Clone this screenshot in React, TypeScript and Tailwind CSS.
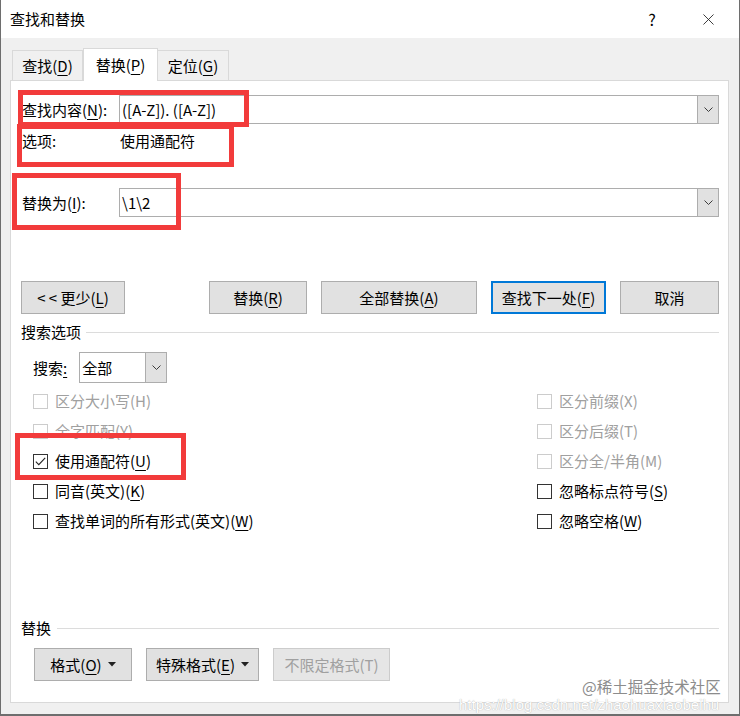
import { X } from "lucide-react";
import clsx from "clsx";
import type { ReactNode } from "react";

// access-key letter with underline
function K({ children }: { children: ReactNode }) {
    return <span className="underline underline-offset-[3px] decoration-1">{children}</span>;
}

function Chevron() {
    return (
        <svg width="9" height="5" viewBox="0 0 9 5" fill="none">
            <path d="M0.5 0.5L4.5 4.5L8.5 0.5" stroke="#3c3c3c" strokeWidth="1" />
        </svg>
    );
}

function ComboBox({ value, className }: { value: string; className?: string }) {
    return (
        <div className={clsx("flex h-[29px] border border-[#adadad] bg-white", className)}>
            <div className="flex-1 flex items-center pl-[2px] leading-[20px]">{value}</div>
            <div className="w-[21px] flex items-center justify-center bg-[#e1e1e1] border-l border-[#adadad]">
                <Chevron />
            </div>
        </div>
    );
}

function Btn({ className, children, primary, disabled }: { className: string; children: ReactNode; primary?: boolean; disabled?: boolean }) {
    return (
        <div
            className={clsx(
                "h-[33px] flex items-center justify-center leading-[20px]",
                primary ? "border-2 border-[#0078d7] bg-[#e1e1e1]" : "border border-[#adadad] bg-[#e1e1e1]",
                disabled && "!border-[#cccccc] !bg-[#e6e6e6] text-[#a0a0a0]",
                className
            )}>
            {children}
        </div>
    );
}

function Caret() {
    return (
        <svg width="8" height="5" viewBox="0 0 8 5" className="ml-[6px]">
            <path d="M0 0H8L4 4.5Z" fill="#222" />
        </svg>
    );
}

function Option({ label, checked, disabled }: { label: ReactNode; checked?: boolean; disabled?: boolean }) {
    return (
        <div className="flex items-center h-[30px] gap-[7px]">
            <div
                className={clsx(
                    "w-[15px] h-[15px] border bg-white flex items-center justify-center",
                    disabled ? "border-[#cccccc]" : "border-[#333333]"
                )}>
                {checked && (
                    <svg width="11" height="9" viewBox="0 0 11 9" fill="none">
                        <path d="M0.8 4.6L3.8 7.6L10.2 0.8" stroke="#222" strokeWidth="1.1" />
                    </svg>
                )}
            </div>
            <span className={clsx("leading-[20px]", disabled ? "text-[#a0a0a0]" : "text-black")}>{label}</span>
        </div>
    );
}

export default function App() {
    return (
        <div className="relative w-[740px] h-[716px] overflow-hidden bg-[#f0f0f0] border-l border-r border-b-2 border-[#6e6e6e] font-['Microsoft_YaHei_UI','Noto_Sans_CJK_SC',sans-serif] text-[15px] text-black">
            {/* title bar */}
            <div className="h-[38px] bg-white flex items-center pl-[9px]">
                <span className="flex-1 leading-[20px]">查找和替换</span>
                <div className="w-[56px] h-full flex items-center justify-center text-[16px]">?</div>
                <div className="w-[56px] h-full flex items-center justify-center mr-[3px]">
                    <X size={19} strokeWidth={1.1} color="#222" />
                </div>
            </div>

            {/* tabs */}
            <div className="flex items-end pl-[11px] pt-[10px]">
                <div className="w-[71px] h-[30px] flex items-center justify-center border border-b-0 border-[#d9d9d9] bg-[#f0f0f0] leading-[20px]">
                    查找(<K>D</K>)
                </div>
                <div className="relative z-10 -mb-px w-[75px] h-[33px] flex items-center justify-center border border-b-0 border-[#d9d9d9] bg-white leading-[20px]">
                    替换(<K>P</K>)
                </div>
                <div className="w-[71px] h-[30px] flex items-center justify-center border border-b-0 border-l-0 border-[#d9d9d9] bg-[#f0f0f0] leading-[20px]">
                    定位(<K>G</K>)
                </div>
            </div>

            {/* panel */}
            <div className="ml-[9px] w-[719px] h-[623px] bg-white border border-[#d9d9d9] pl-[10px] pr-[9px] pt-[14px] flex flex-col">
                <div className="flex items-center">
                    <div className="w-[98px] pl-[1px] leading-[20px]">
                        查找内容(<K>N</K>):
                    </div>
                    <ComboBox value="([A-Z]). ([A-Z])" className="flex-1" />
                </div>
                <div className="flex mt-[7px] h-[20px] leading-[20px]">
                    <div className="w-[98px] pl-[1px]">选项:</div>
                    <div className="pl-[1px]">使用通配符</div>
                </div>
                <div className="flex items-center mt-[37px]">
                    <div className="w-[98px] pl-[1px] leading-[20px]">
                        替换为(<K>I</K>):
                    </div>
                    <ComboBox value="\1\2" className="flex-1" />
                </div>

                <div className="flex justify-between mt-[64px]">
                    <Btn className="w-[104px]">
                        {"< < 更少("}
                        <K>L</K>)
                    </Btn>
                    <div className="flex gap-[14px]">
                        <Btn className="w-[98px]">
                            替换(<K>R</K>)
                        </Btn>
                        <Btn className="w-[156px]">
                            全部替换(<K>A</K>)
                        </Btn>
                        <Btn className="w-[115px]" primary>
                            查找下一处(<K>F</K>)
                        </Btn>
                        <Btn className="w-[99px]">取消</Btn>
                    </div>
                </div>

                <div className="flex items-center gap-[5px] mt-[8px] h-[20px]">
                    <span className="leading-[20px]">搜索选项</span>
                    <div className="flex-1 h-px bg-[#dcdcdc]" />
                </div>

                <div className="flex items-center mt-[10px] pl-[12px] gap-[12px]">
                    <span className="leading-[20px]">
                        搜索<K>:</K>
                    </span>
                    <ComboBox value="全部" className="w-[88px] h-[31px]" />
                </div>

                <div className="grid grid-cols-[504px_1fr] pl-[12px] mt-[3px]">
                    <Option label="区分大小写(H)" disabled />
                    <Option label="区分前缀(X)" disabled />
                    <Option label="全字匹配(Y)" disabled />
                    <Option label="区分后缀(T)" disabled />
                    <Option label={<>使用通配符(<K>U</K>)</>} checked />
                    <Option label="区分全/半角(M)" disabled />
                    <Option label={<>同音(英文)(<K>K</K>)</>} />
                    <Option label={<>忽略标点符号(<K>S</K>)</>} />
                    <Option label={<>查找单词的所有形式(英文)(<K>W</K>)</>} />
                    <Option label={<>忽略空格(<K>W</K>)</>} />
                </div>

                <div className="flex items-center gap-[6px] mt-[82px] h-[20px]">
                    <span className="leading-[20px]">替换</span>
                    <div className="flex-1 h-px bg-[#dcdcdc]" />
                </div>

                <div className="flex gap-[14px] mt-[10px] ml-[13px]">
                    <Btn className="w-[98px]">
                        格式(<K>O</K>)
                        <Caret />
                    </Btn>
                    <Btn className="w-[113px]">
                        特殊格式(<K>E</K>)
                        <Caret />
                    </Btn>
                    <Btn className="w-[117px]" disabled>
                        不限定格式(T)
                    </Btn>
                </div>
            </div>

            {/* annotation boxes drawn over the dialog */}
            <div className="absolute left-[17px] top-[90px] w-[231px] h-[37px] border-[5px] border-[#f23b3b]" />
            <div className="absolute left-[16px] top-[124px] w-[217px] h-[43px] border-[5px] border-[#f23b3b]" />
            <div className="absolute left-[11px] top-[173px] w-[169px] h-[57px] border-[5px] border-[#f23b3b]" />
            <div className="absolute left-[14px] top-[433px] w-[171px] h-[47px] border-[5px] border-[#f23b3b]" />

            {/* watermarks */}
            <div className="absolute left-[581px] top-[677px] text-[15.5px] leading-[19px] text-[#8c8c8c] [text-shadow:0_0_2px_#ffffff]">
                @稀土掘金技术社区
            </div>
            <div className="absolute left-[458px] top-[697px] text-[15px] leading-[16px] text-white [text-shadow:0_0_1px_#9a9a9a] font-['Liberation_Sans',sans-serif]">
                https://blog.csdn.net/zhaohuaxiaobeihu
            </div>
        </div>
    );
}
